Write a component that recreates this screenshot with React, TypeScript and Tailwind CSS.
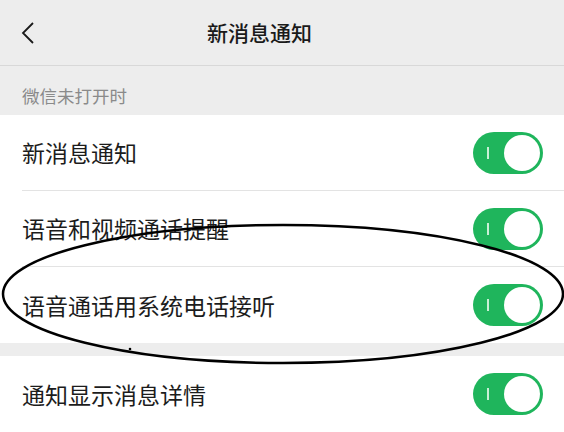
import React from 'react'

const rows = ['新消息通知', '语音和视频通话提醒', '语音通话用系统电话接听']

const Toggle = () => (
  <div className="flex h-[42px] w-[70px] items-center justify-between rounded-full bg-[#1fb55c] pl-[14px] pr-[3px]">
    <span className="h-[12px] w-[2px] bg-[#c9f0d6]" />
    <span className="h-[36px] w-[36px] rounded-full bg-white" />
  </div>
)

const Row = ({ label, divider }: { label: string; divider: boolean }) => (
  <div className="bg-white pl-[22px]">
    <div
      className={
        'flex h-[76px] items-center justify-between pr-[21px] ' +
        (divider ? 'border-b border-[#e3e3e3]' : '')
      }
    >
      <span className="text-[23px] leading-none text-[#1c1c1c]">{label}</span>
      <Toggle />
    </div>
  </div>
)

export default function App() {
  return (
    <div
      className="relative h-[432px] w-[564px] overflow-hidden bg-[#ededed]"
      style={{ fontFamily: '"Noto Sans CJK SC", "Noto Sans", sans-serif' }}
    >
      <div className="flex h-[66px] items-center border-b border-[#d8d8d8] pl-[21px]">
        <svg width="14" height="24" viewBox="0 0 14 24" className="shrink-0">
          <path d="M12 2 L2 12 L12 22" fill="none" stroke="#1a1a1a" strokeWidth="1.8" />
        </svg>
        <div className="flex-1 pr-[80px] text-center text-[21px] font-medium text-[#1a1a1a]">新消息通知</div>
      </div>
      <div className="flex h-[49px] items-end pb-[6px] pl-[22px] text-[17.5px] text-[#8a8a8a]">微信未打开时</div>
      <div className="flex flex-col">
        {rows.map((r, i) => (
          <Row key={r} label={r} divider={i < rows.length - 1} />
        ))}
      </div>
      <div className="h-[13px]" />
      <Row label="通知显示消息详情" divider={false} />

      <svg className="pointer-events-none absolute left-0 top-0" width="564" height="432">
        <ellipse cx="283" cy="294" rx="280" ry="69" fill="none" stroke="#000" strokeWidth="2.5" />
        <circle cx="130" cy="349" r="1.3" fill="#000" />
      </svg>
    </div>
  )
}
